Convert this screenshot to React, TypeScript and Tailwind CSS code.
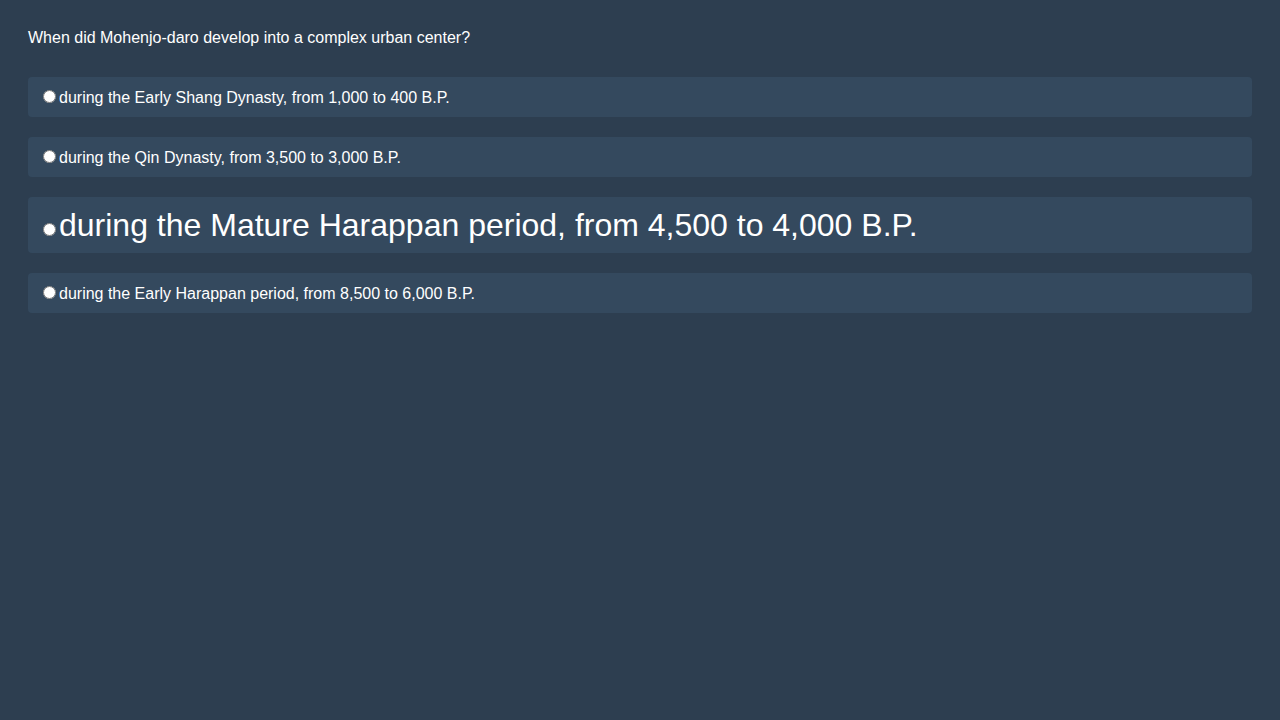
export default function App() {
  const opts = [
    { t: "during the Early Shang Dynasty, from 1,000 to 400 B.P.", big: false },
    { t: "during the Qin Dynasty, from 3,500 to 3,000 B.P.", big: false },
    { t: "during the Mature Harappan period, from 4,500 to 4,000 B.P.", big: true },
    { t: "during the Early Harappan period, from 8,500 to 6,000 B.P.", big: false },
  ];
  return (
    <div
      className="min-h-[720px] w-full bg-[#2d3e50] p-[28px] text-white"
      style={{ fontFamily: '"Liberation Sans", Arial, sans-serif' }}
    >
      <p className="text-[16px] leading-[20px] mb-[29px]">
        When did Mohenjo-daro develop into a complex urban center?
      </p>
      <div className="flex flex-col gap-[20px]">
        {opts.map((o, i) => (
          <label
            key={i}
            className={
              o.big
                ? "block h-[56px] overflow-hidden rounded-[4px] bg-[#34495e] px-[10px] pt-[10px] text-[32px] leading-[37px]"
                : "block h-[40px] overflow-hidden rounded-[4px] bg-[#34495e] px-[10px] py-[10px] text-[16px] leading-[19px]"
            }
          >
            <input type="radio" name="q" className="m-[3px_3px_0_5px] align-baseline" />
            {o.t}
          </label>
        ))}
      </div>
    </div>
  );
}
